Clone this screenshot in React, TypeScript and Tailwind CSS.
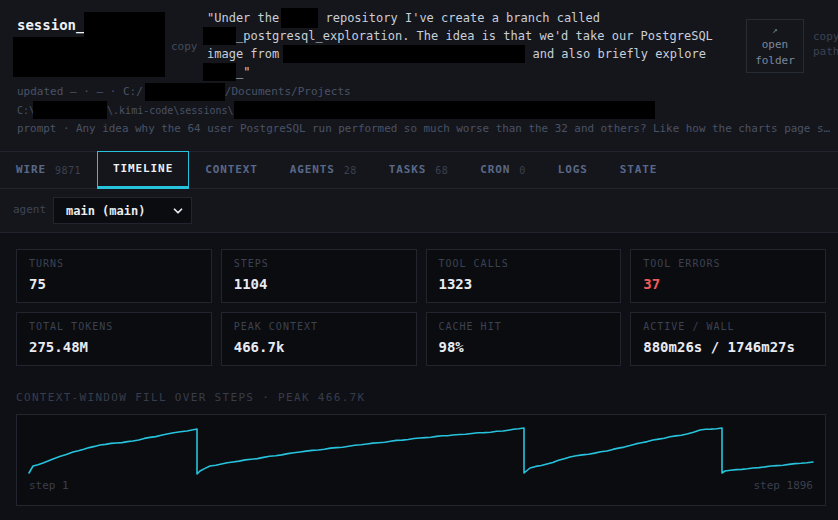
import React from 'react';
import { ChevronDown } from 'lucide-react';

interface Tab {
  label: string;
  count?: string;
  active?: boolean;
}

interface Stat {
  label: string;
  value: string;
  danger?: boolean;
}

const tabs: Tab[] = [
  { label: 'WIRE', count: '9871' },
  { label: 'TIMELINE', active: true },
  { label: 'CONTEXT' },
  { label: 'AGENTS', count: '28' },
  { label: 'TASKS', count: '68' },
  { label: 'CRON', count: '0' },
  { label: 'LOGS' },
  { label: 'STATE' },
];

const stats: Stat[] = [
  { label: 'TURNS', value: '75' },
  { label: 'STEPS', value: '1104' },
  { label: 'TOOL CALLS', value: '1323' },
  { label: 'TOOL ERRORS', value: '37', danger: true },
  { label: 'TOTAL TOKENS', value: '275.48M' },
  { label: 'PEAK CONTEXT', value: '466.7k' },
  { label: 'CACHE HIT', value: '98%' },
  { label: 'ACTIVE / WALL', value: '880m26s / 1746m27s' },
];

// anchor points of the fill curve, in chart pixels (784 x 56)
const anchors: [number, number][][] = [
  [[0, 50], [4, 43], [14, 40], [24, 36], [44, 29], [71, 22], [104, 18], [138, 11], [158, 8], [168, 6]],
  [[168, 51], [171, 48], [181, 43], [204, 39], [271, 29], [338, 21], [391, 15], [424, 12], [474, 8], [495, 5]],
  [[495, 50], [501, 45], [518, 41], [541, 34], [578, 28], [624, 17], [658, 11], [671, 7], [693, 5]],
  [[693, 50], [696, 48], [724, 45], [784, 39]],
];

const buildPath = () => {
  const pts: string[] = [];
  anchors.forEach((seg) => {
    for (let i = 0; i < seg.length; i++) {
      const [x, y] = seg[i];
      if (i === 0) {
        pts.push(`${x},${y}`);
        continue;
      }
      const [px, py] = seg[i - 1];
      const n = Math.max(1, Math.round((x - px) / 6));
      for (let k = 1; k <= n; k++) {
        const t = k / n;
        const wob = k < n ? Math.sin((px + k) * 1.7) * 0.25 : 0;
        pts.push(`${(px + (x - px) * t).toFixed(1)},${(py + (y - py) * t + wob).toFixed(1)}`);
      }
    }
  });
  return pts.join(' ');
};

const Redact: React.FC<{ className: string }> = ({ className }) => (
  <span className={`inline-block shrink-0 bg-black ${className}`} />
);

const App: React.FC = () => {
  return (
    <div className="min-h-[520px] w-[838px] overflow-hidden bg-[#0f1015] font-['DejaVu_Sans_Mono',monospace]">
      {/* header */}
      <div className="bg-[#14161c] pl-[13px] pt-[9px]">
        <div className="flex items-start">
          <div className="mt-[3px] flex w-[152px] flex-none flex-col">
            <div className="flex h-[25px] items-center">
              <span className="pl-[4px] pt-[1px] text-[14px] font-bold text-[#eef0f4]">session_</span>
              <Redact className="h-[25px] flex-1" />
            </div>
            <Redact className="h-[40px] w-full" />
          </div>
          <div className="ml-[6px] mt-[30px] w-[36px] flex-none text-[11px] leading-[15px] text-[#454b59]">copy</div>
          <div className="w-[530px] flex-none text-[12px] leading-[18px] text-[#c9ced8]">
            <div className="flex h-[18px] items-center whitespace-pre">
              <span>"Under the</span>
              <Redact className="ml-[2px] h-[20px] w-[37px]" />
              <span> repository I've create a branch called</span>
            </div>
            <div className="flex h-[18px] items-center whitespace-pre">
              <Redact className="-ml-[4px] h-[18px] w-[33px]" />
              <span>_postgresql_exploration. The idea is that we'd take our PostgreSQL</span>
            </div>
            <div className="flex h-[18px] items-center whitespace-pre">
              <span>image from</span>
              <Redact className="ml-[4px] h-[18px] w-[242px]" />
              <span> and also briefly explore</span>
            </div>
            <div className="flex h-[18px] items-center whitespace-pre">
              <Redact className="-ml-[4px] h-[18px] w-[33px]" />
              <span>_"</span>
            </div>
          </div>
          <div className="ml-[9px] mt-[10px] flex w-[58px] flex-none flex-col items-center border border-[#272b34] py-[3px] text-[11px] text-[#7d8799]">
            <span className="text-[9px] leading-[14px]">↗</span>
            <span className="leading-[16px]">open</span>
            <span className="leading-[16px]">folder</span>
          </div>
          <div className="ml-[9px] mt-[20px] flex-none text-[11px] leading-[15px] text-[#3d4351]">
            <div>copy</div>
            <div>path</div>
          </div>
        </div>

        <div className="mt-[2px] pb-[13px] pl-[4px] text-[#4b5264]">
          <div className="flex h-[18px] items-center whitespace-pre text-[11px]">
            <span>updated — · — · C:/</span>
            <Redact className="ml-[2px] h-[18px] w-[80px]" />
            <span>/Documents/Projects</span>
          </div>
          <div className="flex h-[18px] items-center whitespace-pre text-[10px]">
            <span>C:\</span>
            <Redact className="-ml-[2px] h-[18px] w-[74px]" />
            <span>\.kimi-code\sessions\</span>
            <Redact className="h-[18px] w-[421px]" />
          </div>
          <div className="h-[19px] whitespace-nowrap text-[10.9px] leading-[19px]">
            prompt · Any idea why the 64 user PostgreSQL run performed so much worse than the 32 and others? Like how the charts page s…
          </div>
        </div>
      </div>

      {/* tabs */}
      <div className="flex h-[38px] items-stretch border-y border-[#21242c] bg-[#14161c]">
        {tabs.map((tab) => (
          <div
            key={tab.label}
            className={`-my-px flex items-center border px-[15px] ${
              tab.active ? 'border-[#27c3dd] border-b-[3px] pt-[1px]' : 'border-transparent'
            }`}
          >
            <span
              className={`text-[11px] font-bold tracking-[0.08em] ${tab.active ? 'text-[#eef1f6]' : 'text-[#5a6888]'}`}
            >
              {tab.label}
            </span>
            {tab.count && (
              <span className="ml-[9px] text-[10px] tracking-[0.05em] text-[#3b4150]">{tab.count}</span>
            )}
          </div>
        ))}
      </div>

      {/* agent picker */}
      <div className="flex h-[44px] items-center border-b border-[#21242c] bg-[#14161c] px-[13px]">
        <span className="w-[40px] text-[11px] text-[#3f4554]">agent</span>
        <div className="flex h-[27px] w-[139px] items-center justify-between border border-[#22252d] bg-[#0b0c10] pl-[12px] pr-[6px]">
          <span className="text-[12px] font-bold text-[#e9ecf2]">main (main)</span>
          <ChevronDown size={14} strokeWidth={3} className="text-[#e9ecf2]" />
        </div>
      </div>

      {/* stats */}
      <div className="pl-4 pr-3 pt-4">
        <div className="grid grid-cols-4 gap-[9px]">
          {stats.map((s) => (
            <div key={s.label} className="flex h-[54px] flex-col border border-[#22252d] bg-[#0b0c10] px-[12px] pt-[7px]">
              <span className="text-[10px] leading-[14px] tracking-[0.1em] text-[#3b4252]">{s.label}</span>
              <span
                className={`mt-[3px] text-[14px] font-bold leading-[20px] ${s.danger ? 'text-[#ef5b5b]' : 'text-[#e8ebf1]'}`}
              >
                {s.value}
              </span>
            </div>
          ))}
        </div>

        <div className="mt-[25px] text-[11px] leading-[14px] tracking-[0.12em] text-[#373d4b]">
          CONTEXT-WINDOW FILL OVER STEPS · PEAK 466.7K
        </div>

        <div className="mt-[9px] flex h-[92px] flex-col border border-[#22252d] bg-[#0b0c10] px-[12px] pt-[8px]">
          <svg viewBox="0 0 784 56" preserveAspectRatio="none" className="h-[56px] w-full overflow-visible">
            <polyline
              points={buildPath()}
              fill="none"
              stroke="#27c3dd"
              strokeWidth={1.6}
              strokeLinejoin="round"
              strokeLinecap="round"
            />
          </svg>
          <div className="flex justify-between text-[11px] leading-[14px] text-[#3a3f4b]">
            <span>step 1</span>
            <span>step 1896</span>
          </div>
        </div>
      </div>
    </div>
  );
};

export default App;
